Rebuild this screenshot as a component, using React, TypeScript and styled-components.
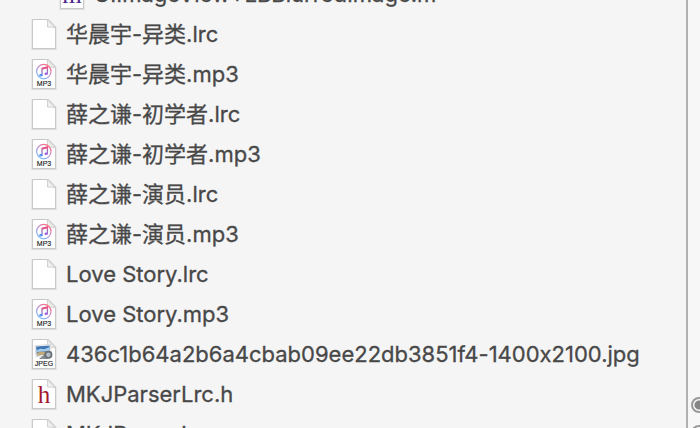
import React from "react";
import styled, { createGlobalStyle } from "styled-components";

const GlobalStyle = createGlobalStyle`
  * { box-sizing: border-box; }
  body { margin: 0; background: #f5f5f5; overflow: hidden; }
`;

const Window = styled.div`
  display: grid;
  grid-template-columns: minmax(0, 1fr) 12px;
  height: 100vh;
  overflow: hidden;
  background: #f5f5f5;
  color: #484848;
  font-family: Inter, "Noto Sans CJK SC", sans-serif;
  font-size: 22px;
  font-feature-settings: "calt" 0;
`;

const Navigator = styled.nav`
  overflow: hidden;
  border-right: 2px solid #b0b0b0;
`;

const FileList = styled.ul`
  list-style: none;
  margin: -26px 0 0;
  padding: 0;
`;

const FileRow = styled.li<{ $nested?: boolean }>`
  display: flex;
  align-items: center;
  gap: 8px;
  height: 40px;
  padding-left: ${(p) => (p.$nested ? 58 : 30)}px;
  white-space: nowrap;
`;

const FileName = styled.span`
  line-height: 40px;
  -webkit-text-stroke: 0.3px currentColor;
`;

const FileIcon = styled.svg`
  flex: none;
  width: 28px;
  height: 34px;
`;

const Inspector = styled.aside`
  display: flex;
  flex-direction: column;
  justify-content: flex-end;
  gap: 12px;
  padding-left: 3px;
  margin-bottom: -13px;
  overflow: hidden;
  background: #f7f7f7;
`;

const Radio = styled.input`
  appearance: none;
  flex: none;
  width: 16px;
  height: 16px;
  margin: 0;
  border: 2px solid #999;
  border-radius: 50%;
  background: #f7f7f7;

  &:checked {
    background: radial-gradient(circle, #858585 4px, #f7f7f7 5px);
  }
`;

type Kind = "blank" | "mp3" | "jpeg" | "h" | "m";

const Label = ({ text }: { text: string }) => (
  <text x="14" y="29" textAnchor="middle" fontFamily="'Liberation Sans', sans-serif" fontSize="7" fill="#222" stroke="#222" strokeWidth="0.15">
    {text}
  </text>
);

const Art = ({ kind }: { kind: Kind }) => {
  if (kind === "mp3") {
    return (
      <>
        <circle cx="13.8" cy="14.6" r="7.2" fill="#fff" stroke="url(#ring)" strokeWidth="1.2" />
        <path d="M12 18.2v-7l5.4-1.3v6.8M12 12l5.4-1.3" fill="none" stroke="url(#note)" strokeWidth="1.3" />
        <ellipse cx="10.9" cy="18.2" rx="1.7" ry="1.3" fill="#5b8cf0" />
        <ellipse cx="16.2" cy="16.8" rx="1.7" ry="1.3" fill="#a260d8" />
        <Label text="MP3" />
      </>
    );
  }
  if (kind === "jpeg") {
    return (
      <>
        <g transform="rotate(-5 13 14)">
          <rect x="5.5" y="8" width="15.5" height="11" fill="#fff" stroke="#c6c6c6" strokeWidth="0.6" />
          <rect x="6.5" y="9" width="13.5" height="9" fill="#3f78b5" />
          <path d="M6.5 13l4-1.5 4 1 5.5-2v4H6.5z" fill="#a9cde8" />
          <path d="M6.5 15.5l4-1 9.5 1V18H6.5z" fill="#c1a979" />
        </g>
        <path d="M9 22l6-5 3 5z" fill="#858b90" />
        <circle cx="18.4" cy="17.8" r="4" fill="#666d75" />
        <circle cx="18.4" cy="17.8" r="2.3" fill="#b5bec7" />
        <Label text="JPEG" />
      </>
    );
  }
  if (kind === "h" || kind === "m") {
    return (
      <text
        x="14"
        y="26"
        textAnchor="middle"
        fontFamily="'Liberation Serif', serif"
        fontSize="25"
        fill={kind === "h" ? "#a3182d" : "#4b2388"}
      >
        {kind}
      </text>
    );
  }
  return null;
};

const DocumentIcon = ({ kind }: { kind: Kind }) => (
  <FileIcon viewBox="0 0 28 34" aria-hidden="true">
    <path d="M2.5 3h16l7 7.5v21.5h-23z" fill="none" stroke="#000" strokeOpacity="0.1" strokeWidth="2" />
    <path d="M2.5 2.5h15.5l7.5 7.5v21.5h-23z" fill="#fff" stroke="#c8c8c8" strokeWidth="1" />
    <path d="M17 2.5q1 3 0.5 7.5q4-.5 8 1z" fill="#f1f1f1" stroke="#cfcfcf" strokeWidth="1" />
    <Art kind={kind} />
  </FileIcon>
);

const Gradients = styled.svg`
  display: block;
  width: 0;
  height: 0;
`;

const files: { name: string; kind: Kind; nested?: boolean }[] = [
  { name: "UIImageView+LBBlurredImage.m", kind: "m", nested: true },
  { name: "华晨宇-异类.lrc", kind: "blank" },
  { name: "华晨宇-异类.mp3", kind: "mp3" },
  { name: "薛之谦-初学者.lrc", kind: "blank" },
  { name: "薛之谦-初学者.mp3", kind: "mp3" },
  { name: "薛之谦-演员.lrc", kind: "blank" },
  { name: "薛之谦-演员.mp3", kind: "mp3" },
  { name: "Love Story.lrc", kind: "blank" },
  { name: "Love Story.mp3", kind: "mp3" },
  { name: "436c1b64a2b6a4cbab09ee22db3851f4-1400x2100.jpg", kind: "jpeg" },
  { name: "MKJParserLrc.h", kind: "h" },
  { name: "MKJParserLrc.m", kind: "m" },
];

export default function App() {
  return (
    <Window>
      <GlobalStyle />
      <Navigator aria-label="Project files">
        <Gradients aria-hidden="true">
          <defs>
            <linearGradient id="ring" x1="0" y1="1" x2="0.7" y2="0">
              <stop offset="0" stopColor="#4fc3f7" />
              <stop offset="0.5" stopColor="#b79be6" />
              <stop offset="1" stopColor="#fb6c85" />
            </linearGradient>
            <linearGradient id="note" x1="0" y1="1" x2="0" y2="0">
              <stop offset="0" stopColor="#5b8cf0" />
              <stop offset="1" stopColor="#f0507f" />
            </linearGradient>
          </defs>
        </Gradients>
        <FileList>
          {files.map((file) => (
            <FileRow key={file.name} $nested={file.nested}>
              <DocumentIcon kind={file.kind} />
              <FileName>{file.name}</FileName>
            </FileRow>
          ))}
        </FileList>
      </Navigator>
      <Inspector>
        <Radio type="radio" name="target" aria-label="First option" defaultChecked />
        <Radio type="radio" name="target" aria-label="Second option" />
      </Inspector>
    </Window>
  );
}
